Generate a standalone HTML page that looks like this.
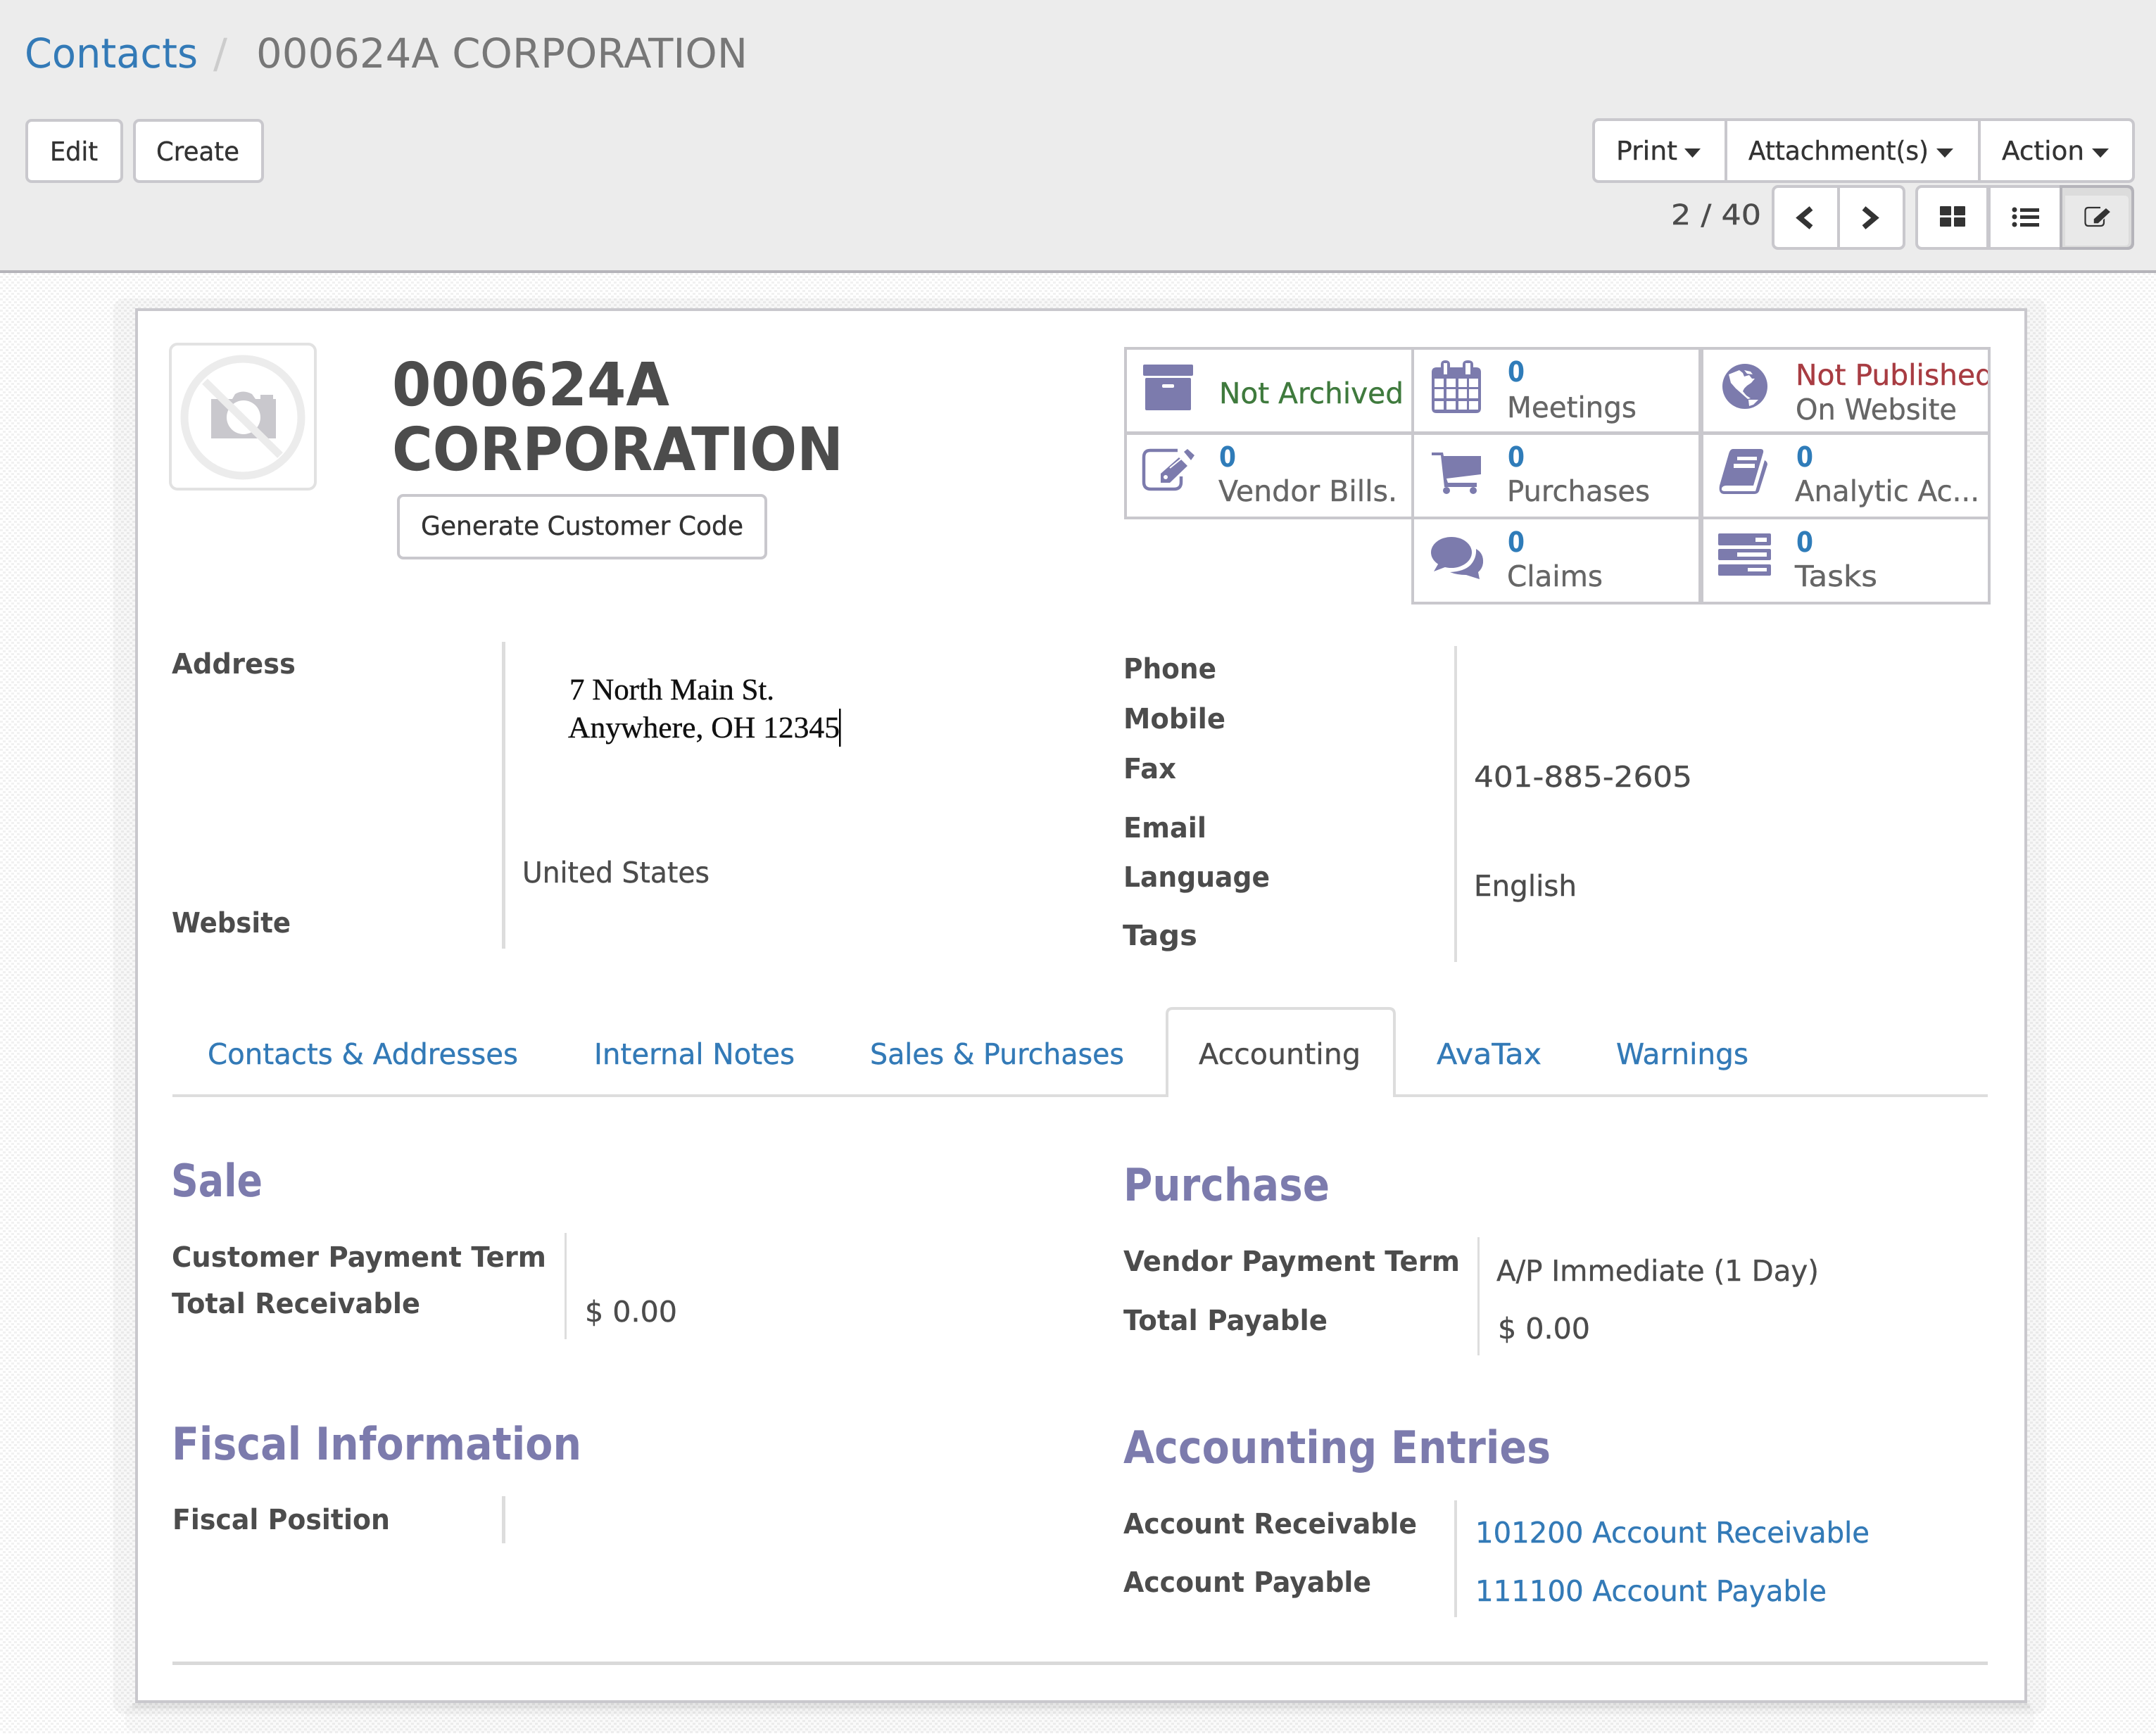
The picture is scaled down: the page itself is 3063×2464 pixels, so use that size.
<!DOCTYPE html>
<html lang="en">
<head>
<meta charset="utf-8">
<title>000624A CORPORATION</title>
<style>
html,body{margin:0;padding:0;width:3063px;height:2464px;overflow:hidden;background:#fff}
svg{display:block}
text{font-family:"DejaVu Sans","Liberation Sans",sans-serif;text-rendering:geometricPrecision;white-space:pre}
.r{font-size:41px;fill:#4c4c4c;stroke:#4c4c4c;stroke-width:.4px}
.g{font-size:41px;fill:#666;stroke:#666;stroke-width:.4px}
.b{font-size:40px;font-weight:700;fill:#4c4c4c}
.a{font-size:41px;fill:#337ab7;stroke:#337ab7;stroke-width:.4px}
.z{font-size:40px;font-weight:700;fill:#2f7cb9}
.h{font-size:64px;font-weight:700;fill:#7c7bad}
.t{font-size:37px;fill:#333;stroke:#333;stroke-width:.4px}
.s{font-family:"Liberation Serif",serif;font-size:43px;fill:#111;stroke:#111;stroke-width:.4px}
.p{fill:#7c7bad}
</style>
</head>
<body>
<svg width="3063" height="2464" viewBox="0 0 3063 2464" xmlns="http://www.w3.org/2000/svg">
<defs>
<pattern id="dots" width="8" height="8" patternUnits="userSpaceOnUse">
<rect width="8" height="8" fill="#fff"/>
<rect x="0" y="0" width="4" height="3" fill="#f1f1f1"/>
<rect x="4" y="4" width="4" height="3" fill="#f1f1f1"/>
</pattern>
<clipPath id="pub"><rect x="2540" y="497" width="284" height="116"/></clipPath>
</defs>

<!-- background -->
<rect width="3063" height="2464" fill="url(#dots)"/>

<!-- header -->
<rect width="3063" height="384" fill="#ececec"/>
<rect y="384" width="3063" height="4" fill="#b5b4ba"/>
<text x="35" y="96" font-size="58" fill="#337ab7" textLength="246" lengthAdjust="spacingAndGlyphs">Contacts</text>
<text x="303" y="96" font-size="58" fill="#cccccc" textLength="20" lengthAdjust="spacingAndGlyphs">/</text>
<text x="364" y="96" font-size="58" fill="#777777" textLength="698" lengthAdjust="spacingAndGlyphs">000624A CORPORATION</text>

<g fill="#fff" stroke="#c9c8cd" stroke-width="4">
<rect x="38" y="171" width="135" height="87" rx="7"/>
<rect x="191" y="171" width="182" height="87" rx="7"/>
<rect x="2264" y="170" width="767" height="88" rx="7"/>
<rect x="2519" y="265" width="186" height="88" rx="7"/>
<rect x="2723" y="265" width="307" height="88" rx="7"/>
</g>
<rect x="2450" y="170" width="4" height="88" fill="#c9c8cd"/>
<rect x="2810" y="170" width="4" height="88" fill="#c9c8cd"/>
<rect x="2610" y="265" width="4" height="88" fill="#c9c8cd"/>
<rect x="2822" y="265" width="6" height="88" fill="#c9c8cd"/>
<path d="M2926 263H3022Q3032 263 3032 273V345Q3032 355 3022 355H2926Z" fill="#b5b4ba"/>
<path d="M2930 267H3021Q3028 267 3028 274V344Q3028 351 3021 351H2930Z" fill="#dcdcdc"/>
<path d="M2934 278Q2934 278 2942 278H3018Q3024 278 3024 284V344Q3024 349 3019 349H2934Z" fill="#e9e9e9"/>

<text class="t" x="71" y="228" textLength="68" lengthAdjust="spacingAndGlyphs">Edit</text>
<text class="t" x="222" y="228" textLength="118" lengthAdjust="spacingAndGlyphs">Create</text>
<text class="t" x="2296" y="227" textLength="87" lengthAdjust="spacingAndGlyphs">Print</text>
<path d="M2393 211H2416L2404.500 224Z" fill="#333"/>
<text class="t" x="2484" y="227" textLength="256" lengthAdjust="spacingAndGlyphs">Attachment(s)</text>
<path d="M2751 211H2775L2763 224Z" fill="#333"/>
<text class="t" x="2844" y="227" textLength="117" lengthAdjust="spacingAndGlyphs">Action</text>
<path d="M2972 211H2996L2984 224Z" fill="#333"/>
<text x="2374" y="319" font-size="40" fill="#4c4c4c" stroke="#4c4c4c" stroke-width=".4" textLength="128" lengthAdjust="spacingAndGlyphs">2 / 40</text>
<path d="M2573 296L2557 309.500L2573 323" fill="none" stroke="#333" stroke-width="7.500"/>
<path d="M2648 296L2664 309.500L2648 323" fill="none" stroke="#333" stroke-width="7.500"/>
<g fill="#333">
<rect x="2756" y="293" width="16" height="13" rx="1"/>
<rect x="2776" y="293" width="16" height="13" rx="1"/>
<rect x="2756" y="309" width="16" height="13" rx="1"/>
<rect x="2776" y="309" width="16" height="13" rx="1"/>
<circle cx="2862" cy="298" r="3.500"/><circle cx="2862" cy="308" r="3.500"/><circle cx="2862" cy="319" r="3.500"/>
<rect x="2870" y="296" width="27" height="5"/>
<rect x="2870" y="306" width="27" height="5"/>
<rect x="2870" y="317" width="27" height="5"/>
</g>
<path d="M2984 295H2967Q2962.500 295 2962.500 300V316Q2962.500 321 2967 321H2984Q2989 321 2989 316V308" fill="none" stroke="#333" stroke-width="2.200"/>
<path d="M2974 318V311L2992 295L2999 301L2981 318Z" fill="#333" stroke="#e9e9e9" stroke-width="1.500"/>

<!-- card shadow -->
<rect x="161" y="424" width="2746" height="2012" rx="16" fill="#000" opacity=".03"/>
<rect x="178" y="2420" width="2712" height="42" rx="14" fill="#000" opacity=".018"/>
<rect x="188" y="2420" width="2696" height="8" fill="#000" opacity=".05"/>

<!-- card -->
<rect x="194" y="440" width="2684" height="1978" fill="#fff" stroke="#c9c8cd" stroke-width="4"/>

<!-- avatar -->
<rect x="242" y="489" width="206" height="206" rx="10" fill="#fff" stroke="#e2e2e2" stroke-width="4"/>
<path d="M300 567H330L334 560Q345 553 358 560L363 567H370V561H388V567H392V623H300Z" fill="#c9c8cd"/>
<circle cx="346" cy="593" r="24" fill="#fff"/>
<circle cx="345" cy="593" r="83" fill="none" stroke="#ececec" stroke-width="11"/>
<path d="M291 542L398 647" stroke="#ececec" stroke-width="11" fill="none"/>

<!-- title -->
<text x="557" y="576" font-size="85" font-weight="700" fill="#4c4c4c" textLength="394" lengthAdjust="spacingAndGlyphs">000624A</text>
<text x="557" y="668" font-size="85" font-weight="700" fill="#4c4c4c" textLength="641" lengthAdjust="spacingAndGlyphs">CORPORATION</text>
<rect x="566" y="704" width="522" height="89" rx="7" fill="#fff" stroke="#c9c8cd" stroke-width="4"/>
<text class="t" x="598" y="760" textLength="458" lengthAdjust="spacingAndGlyphs">Generate Customer Code</text>

<!-- stat buttons grid -->
<g fill="#c9c8cd">
<rect x="1597" y="493" width="1231" height="4"/>
<rect x="1597" y="613" width="1231" height="5"/>
<rect x="1597" y="734" width="1231" height="4"/>
<rect x="2005" y="855" width="823" height="4"/>
<rect x="1597" y="493" width="4" height="245"/>
<rect x="2005" y="493" width="4" height="366"/>
<rect x="2413" y="493" width="7" height="366"/>
<rect x="2824" y="493" width="4" height="366"/>
</g>

<!-- archive -->
<rect class="p" x="1624" y="518" width="71" height="16" rx="2"/>
<rect class="p" x="1627" y="537" width="65" height="46" rx="2"/>
<rect x="1651" y="546" width="17" height="5" rx="2" fill="#fff"/>
<text x="1732" y="573" font-size="41" fill="#3f7a3d" stroke="#3f7a3d" stroke-width=".4" textLength="262" lengthAdjust="spacingAndGlyphs">Not Archived</text>

<!-- calendar -->
<path class="p" d="M2041 522H2047V518Q2047 512 2053.500 512Q2060 512 2060 518V522H2078V518Q2078 512 2085.500 512Q2093 512 2093 518V522H2097Q2104 522 2104 529V580Q2104 587 2097 587H2041Q2034 587 2034 580V529Q2034 522 2041 522Z"/>
<g fill="#fff">
<rect x="2051" y="516" width="5" height="16"/><rect x="2082" y="516" width="7" height="16"/>
<rect x="2038" y="538" width="13" height="12"/><rect x="2055" y="538" width="13" height="12"/><rect x="2072" y="538" width="12" height="12"/><rect x="2087" y="538" width="13" height="12"/>
<rect x="2038" y="553" width="13" height="13"/><rect x="2055" y="553" width="13" height="13"/><rect x="2072" y="553" width="12" height="13"/><rect x="2087" y="553" width="13" height="13"/>
<rect x="2038" y="570" width="13" height="12"/><rect x="2055" y="570" width="13" height="12"/><rect x="2072" y="570" width="12" height="12"/><rect x="2087" y="570" width="13" height="12"/>
</g>
<text class="z" x="2142" y="542" textLength="24" lengthAdjust="spacingAndGlyphs">0</text>
<text class="g" x="2141" y="593" textLength="184" lengthAdjust="spacingAndGlyphs">Meetings</text>

<!-- globe -->
<circle class="p" cx="2479" cy="549" r="32"/>
<path d="M2456 532L2471 526L2476 530L2478 535L2485 533L2489 538L2493 538L2488 544L2482 548L2478 552L2476 556L2481 562L2487 566L2483 567L2474 559L2466 552L2459 544Z M2478 526L2487 528L2490 532L2482 531Z M2484 568L2498 568L2491 575L2485 577Z" fill="#fff"/>
<g clip-path="url(#pub)"><text x="2551" y="547" font-size="41" fill="#a83c42" stroke="#a83c42" stroke-width=".4" textLength="281" lengthAdjust="spacingAndGlyphs">Not Published</text></g>
<text class="g" x="2551" y="596" textLength="229" lengthAdjust="spacingAndGlyphs">On Website</text>

<!-- edit -->
<path d="M1673 640H1634Q1625 640 1625 650V685Q1625 695 1635 695H1668Q1678 695 1678 685V677" fill="none" stroke="#7c7bad" stroke-width="4.500"/>
<path class="p" d="M1649 686V673L1675 650L1687 662L1662 686Z"/>
<path class="p" d="M1682 642L1687 638L1697 647L1692 654Z"/>
<path d="M1662 665L1678 652" stroke="#fff" stroke-width="2" fill="none"/>
<circle cx="1656" cy="678" r="3" fill="#fff"/>
<text class="z" x="1732" y="663" textLength="24" lengthAdjust="spacingAndGlyphs">0</text>
<text class="g" x="1731" y="712" textLength="254" lengthAdjust="spacingAndGlyphs">Vendor Bills.</text>

<!-- cart -->
<path class="p" d="M2034 643H2050L2051 648H2104V674L2055 680L2057 686H2098V692H2052L2047 647H2034Z"/>
<circle class="p" cx="2055" cy="697" r="5"/><circle class="p" cx="2093" cy="697" r="5"/>
<text class="z" x="2142" y="663" textLength="24" lengthAdjust="spacingAndGlyphs">0</text>
<text class="g" x="2141" y="712" textLength="203" lengthAdjust="spacingAndGlyphs">Purchases</text>

<!-- book -->
<path class="p" d="M2462 638H2501Q2506 638 2505 643L2491 690H2453Q2447 690 2446 694Q2445 698 2451 698H2494L2507 654Q2511 656 2511 660L2499 698Q2497 702 2492 702H2450Q2441 702 2443 690L2456 645Q2458 638 2462 638Z"/>
<rect x="2468" y="649" width="28" height="5" fill="#fff"/>
<rect x="2463" y="659" width="30" height="6" fill="#fff"/>
<text class="z" x="2552" y="663" textLength="24" lengthAdjust="spacingAndGlyphs">0</text>
<text class="g" x="2550" y="712" textLength="262" lengthAdjust="spacingAndGlyphs">Analytic Ac...</text>

<!-- chat -->
<ellipse class="p" cx="2062" cy="785" rx="29" ry="22"/>
<path class="p" d="M2044 800L2037 812L2058 804Z"/>
<path class="p" d="M2097 780Q2108 786 2107 800Q2106 808 2100 813L2102 823L2083 817Q2070 817 2060 813Q2080 812 2089 803Q2098 793 2097 780Z"/>
<text class="z" x="2142" y="784" textLength="24" lengthAdjust="spacingAndGlyphs">0</text>
<text class="g" x="2141" y="833" textLength="136" lengthAdjust="spacingAndGlyphs">Claims</text>

<!-- tasks -->
<rect class="p" x="2441" y="758" width="75" height="17" rx="2"/>
<rect class="p" x="2441" y="780" width="75" height="16" rx="2"/>
<rect class="p" x="2441" y="802" width="75" height="16" rx="2"/>
<rect x="2494" y="764" width="16" height="6" fill="#fff"/>
<rect x="2468" y="785" width="42" height="6" fill="#fff"/>
<rect x="2483" y="807" width="27" height="5" fill="#fff"/>
<text class="z" x="2552" y="784" textLength="24" lengthAdjust="spacingAndGlyphs">0</text>
<text class="g" x="2550" y="833" textLength="117" lengthAdjust="spacingAndGlyphs">Tasks</text>

<!-- form top -->
<text class="b" x="244" y="957" textLength="176" lengthAdjust="spacingAndGlyphs">Address</text>
<text class="b" x="244" y="1325" textLength="169" lengthAdjust="spacingAndGlyphs">Website</text>
<rect x="713" y="912" width="5" height="436" fill="#dddddd"/>
<text class="s" x="809" y="994" textLength="291" lengthAdjust="spacingAndGlyphs">7 North Main St.</text>
<text class="s" x="807" y="1048" textLength="386" lengthAdjust="spacingAndGlyphs">Anywhere, OH 12345</text>
<rect x="1192" y="1007" width="2.500" height="54" fill="#000"/>
<text class="r" x="742" y="1254" textLength="266" lengthAdjust="spacingAndGlyphs">United States</text>

<text class="b" x="1596" y="964" textLength="132" lengthAdjust="spacingAndGlyphs">Phone</text>
<text class="b" x="1596" y="1035" textLength="145" lengthAdjust="spacingAndGlyphs">Mobile</text>
<text class="b" x="1596" y="1106" textLength="75" lengthAdjust="spacingAndGlyphs">Fax</text>
<text class="b" x="1596" y="1190" textLength="118" lengthAdjust="spacingAndGlyphs">Email</text>
<text class="b" x="1596" y="1260" textLength="208" lengthAdjust="spacingAndGlyphs">Language</text>
<text class="b" x="1595" y="1343" textLength="106" lengthAdjust="spacingAndGlyphs">Tags</text>
<rect x="2066" y="918" width="4" height="449" fill="#dddddd"/>
<text class="r" x="2094" y="1118" textLength="310" lengthAdjust="spacingAndGlyphs">401-885-2605</text>
<text class="r" x="2094" y="1273" textLength="146" lengthAdjust="spacingAndGlyphs">English</text>

<!-- tabs -->
<rect x="245" y="1555" width="2579" height="4" fill="#dddddd"/>
<path d="M1658 1557V1441Q1658 1433 1666 1433H1973Q1981 1433 1981 1441V1557" fill="#fff" stroke="#dddddd" stroke-width="4"/>
<rect x="1660" y="1553" width="319" height="8" fill="#fff"/>
<text class="a" x="295" y="1512" textLength="441" lengthAdjust="spacingAndGlyphs">Contacts &amp; Addresses</text>
<text class="a" x="844" y="1512" textLength="285" lengthAdjust="spacingAndGlyphs">Internal Notes</text>
<text class="a" x="1236" y="1512" textLength="361" lengthAdjust="spacingAndGlyphs">Sales &amp; Purchases</text>
<text class="r" x="1703" y="1512" textLength="230" lengthAdjust="spacingAndGlyphs">Accounting</text>
<text class="a" x="2041" y="1512" textLength="149" lengthAdjust="spacingAndGlyphs">AvaTax</text>
<text class="a" x="2296" y="1512" textLength="188" lengthAdjust="spacingAndGlyphs">Warnings</text>

<!-- sale / purchase -->
<text class="h" x="243" y="1700" textLength="130" lengthAdjust="spacingAndGlyphs">Sale</text>
<text class="h" x="1596" y="1706" textLength="293" lengthAdjust="spacingAndGlyphs">Purchase</text>
<text class="b" x="244" y="1800" textLength="532" lengthAdjust="spacingAndGlyphs">Customer Payment Term</text>
<text class="b" x="244" y="1866" textLength="353" lengthAdjust="spacingAndGlyphs">Total Receivable</text>
<rect x="802" y="1752" width="3" height="151" fill="#dddddd"/>
<text class="r" x="831" y="1878" textLength="131" lengthAdjust="spacingAndGlyphs">$ 0.00</text>
<text class="b" x="1596" y="1806" textLength="478" lengthAdjust="spacingAndGlyphs">Vendor Payment Term</text>
<text class="b" x="1596" y="1890" textLength="290" lengthAdjust="spacingAndGlyphs">Total Payable</text>
<rect x="2099" y="1758" width="3" height="168" fill="#dddddd"/>
<text class="r" x="2126" y="1820" textLength="458" lengthAdjust="spacingAndGlyphs">A/P Immediate (1 Day)</text>
<text class="r" x="2128" y="1902" textLength="131" lengthAdjust="spacingAndGlyphs">$ 0.00</text>

<!-- fiscal / accounting entries -->
<text class="h" x="244" y="2074" textLength="582" lengthAdjust="spacingAndGlyphs">Fiscal Information</text>
<text class="b" x="245" y="2173" textLength="309" lengthAdjust="spacingAndGlyphs">Fiscal Position</text>
<rect x="713" y="2126" width="5" height="67" fill="#dddddd"/>
<text class="h" x="1596" y="2079" textLength="607" lengthAdjust="spacingAndGlyphs">Accounting Entries</text>
<text class="b" x="1596" y="2179" textLength="417" lengthAdjust="spacingAndGlyphs">Account Receivable</text>
<text class="b" x="1596" y="2262" textLength="352" lengthAdjust="spacingAndGlyphs">Account Payable</text>
<rect x="2066" y="2132" width="4" height="166" fill="#dddddd"/>
<text class="a" x="2096" y="2192" textLength="560" lengthAdjust="spacingAndGlyphs">101200 Account Receivable</text>
<text class="a" x="2096" y="2275" textLength="499" lengthAdjust="spacingAndGlyphs">111100 Account Payable</text>
<rect x="245" y="2361" width="2579" height="5" fill="#d9d9d9"/>
</svg>
</body>
</html>
